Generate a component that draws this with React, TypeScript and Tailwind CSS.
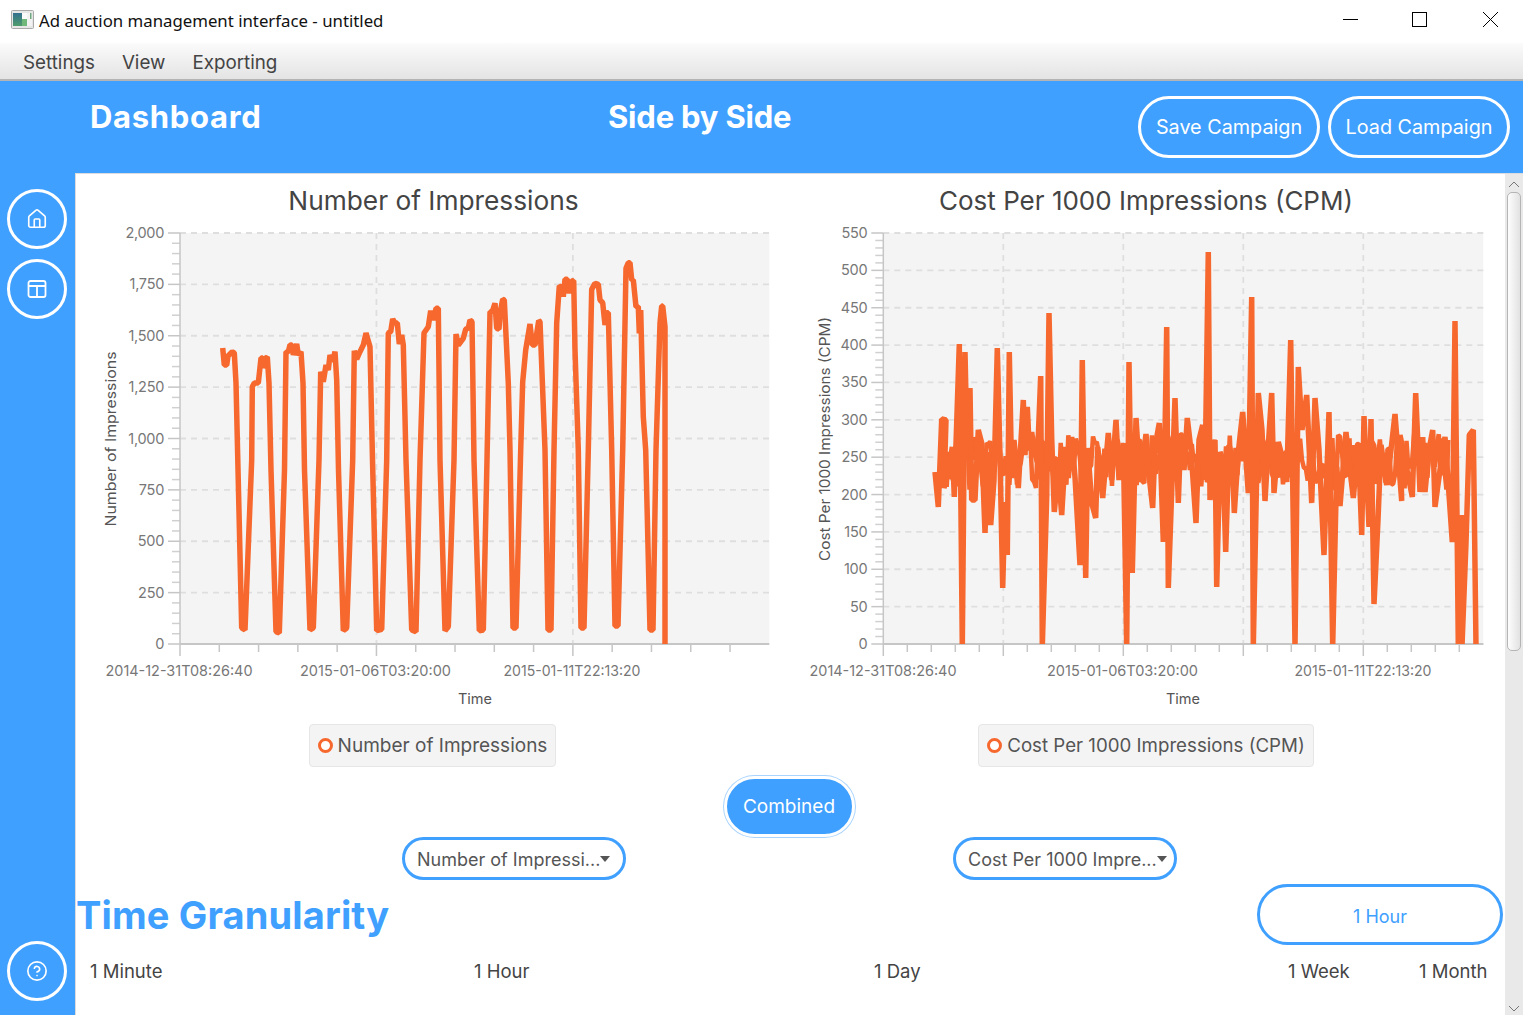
import React from 'react';
import { House, CircleHelp } from 'lucide-react';

const POPPINS = "font-['Inter',sans-serif]";

// traced from the reference, page coordinates
const impressions =
  '222.7,348 224.3,365 226.7,365 228,356 232.3,351.7 234.3,353 236,383 241.7,628 245,630 251.7,460 252.3,386.7 254.3,383 258.3,383 261,358 262.7,358 263.3,368 265.7,358 267.3,357 269,383 271,470 276,631.7 279.3,633 284.5,470 286,351.7 288.3,352 290,345 292,345 293.3,355 296.7,344 298.3,355 301,351.7 303,383 304.5,470 310,630 313.3,628 319,460 320.7,371.7 323.3,381.7 326,365 328.3,370 330,355 332.7,361.7 335,351.7 336.7,380 338.5,470 343.3,630.7 346.7,628 352.7,460 354.3,350.7 356.7,359 360,351.7 363.3,345 366,333 370,346.7 372.5,460 376.7,630.7 381.7,629.3 386.7,460 388.3,333 390.7,331.7 392.7,319 395,323 397.3,323 399.3,344 401.7,335 403.3,345 406,460 411.7,630 416,631.7 420,460 424,333 428.3,326.7 430.7,310.7 433.3,320 436,308.3 438.3,308.3 440,460 445,630.7 448.3,626.7 454,460 456,334 458.3,345 463.3,338.3 465.7,329.3 468.3,328 470,320 472,321.7 474,460 479.3,630.7 483.3,630 487,460 490,311.7 492.3,311.7 495,303.3 496.7,328.3 499,329 500,313 502.7,299.3 504.3,300 508.3,383 510,450 513,628 516,628 520.7,450 522.7,381.7 525.7,350 530,324 532.3,345 535,345 538.7,320.7 540,321.7 545,450 548,630 551,630 554,450 556.7,323 559.3,286 562,287 563.3,296.7 565,279.3 567.3,279.3 569.3,293.3 571.7,281 573.7,280.7 575,350 578.3,450 581,628 584,628 588.3,450 591.7,289.3 595,283.3 598.3,284.3 600,300 602.7,302.7 605,325 606.7,312.7 608.3,312.7 611.7,450 615,626 618,626 622.7,450 626,268.3 628.3,262.7 630,262.7 631.7,280 633.3,280 636,306.7 638.3,306.7 639.3,333.3 640.7,310 643.3,416.7 645.7,450 650,630 653,630 656,450 660,323 661.7,306 662.7,306 665,326.7 665,644';

const cpm =
  '935,472 938.3,507 941.7,419 946,420 944,488 948.3,473 952.3,447 954.3,497 955.7,453 959.3,344 962.3,646 965,352 967,445 970,388 971.7,500 975,500 978.3,430 981.7,443 985,533 988.3,452 990.7,525 994,480 997.3,348 1000,457 1002.7,588 1005,502 1007.3,555 1009.3,352 1011.7,478 1014,440 1018.3,488 1023.3,400 1025,455 1027.3,407 1029.3,450 1031.7,432 1034,450 1037.3,462 1040.7,376 1042.3,646 1046.7,497 1049,313 1051.7,438 1054.3,512 1058.3,470 1061.7,515 1065.7,447 1068.3,478 1071.7,437 1075,477 1080,565 1082.3,360 1085.7,578 1087.7,448 1091.7,503 1095.7,518 1097.7,447 1102.7,498 1108.3,433 1111.7,480 1116,420 1119,480 1123.3,443 1126.7,646 1129,362 1132.3,573 1136,418 1140,482 1146,434 1149,475 1152.7,508 1155,447 1159.3,423 1163.3,542 1166.7,327 1168.3,588 1175,398 1178.3,503 1180.7,437 1184,470 1187.3,418 1191,450 1196,523 1199,440 1202.7,425 1205,480 1208.3,252 1210,500 1215,440 1216.7,587 1220,452 1223,460 1225.7,552 1229,445 1232.3,458 1234.3,513 1238.3,452 1242.7,412 1248.3,493 1251.7,297 1253.3,646 1258.3,393 1262,430 1265,501 1268,450 1271.7,393 1274,493 1278.3,442 1283,460 1286.7,482 1290.7,340 1295,646 1298.3,367 1302,430 1306.7,395 1311.7,503 1315,398 1319,450 1324,555 1329,412 1332.7,646 1336.7,467 1340,506 1346,432 1350,470 1353.3,498 1358.3,443 1361.7,535 1364,416 1369,527 1371,419 1374,604 1378,520 1381,445 1386.7,485 1391,450 1395,414 1401.7,501 1400,435 1407,470 1412.3,497 1415.7,393 1420,492 1422.7,437 1425,492 1429,450 1432.7,430 1435,507 1440,470 1445,437 1452.3,542 1455,321 1458.3,646 1461.7,515 1462,646 1466,543 1469.3,435 1473.3,430 1476,646';

// the hourly noise between the traced spikes, too dense to trace by hand
const cpmNoise = (() => {
  const pts: string[] = [];
  let seed = 17;
  for (let x = 941; x < 1450; x += 1.9) {
    seed = (seed * 137 + 59) % 1009;
    const y = 434 + (seed / 1009) * 56;
    pts.push(`${x.toFixed(1)},${y.toFixed(1)}`);
  }
  return pts.join(' ');
})();

const Chart: React.FC<{
  box: string;
  width: number;
  plotLeft: number;
  plotRight: number;
  yLabels: string[];
  majorX: number;
  minorStep: number;
  xLabels: { x: number; w: number; text: string }[];
  points: string;
  extra?: string;
  yTitle: string;
  yTitleX: number;
  yTitleLen: number;
  timeX: number;
  clip: string;
}> = ({ box, width, plotLeft, plotRight, yLabels, majorX, minorStep, xLabels, points, extra, yTitle, yTitleX, yTitleLen, timeX, clip }) => {
  const top = 233;
  const bottom = 644;
  const step = (bottom - top) / (yLabels.length - 1);
  const xTicks: number[] = [];
  for (let x = plotLeft + minorStep; x < plotRight - 1; x += minorStep) xTicks.push(x);
  const majors = xTicks.filter((x) => Math.abs(((x - plotLeft) / majorX) - Math.round((x - plotLeft) / majorX)) < 0.01);

  return (
    <svg width={width} height={492} viewBox={box} className="block">
      <defs>
        <clipPath id={clip}>
          <rect x={plotLeft} y={top} width={plotRight - plotLeft} height={bottom - top} />
        </clipPath>
      </defs>
      <rect x={plotLeft} y={top} width={plotRight - plotLeft} height={bottom - top} fill="#f4f4f4" />
      {yLabels.map((label, i) => {
        const y = top + i * step;
        return (
          <g key={label}>
            <line x1={plotLeft} x2={plotRight} y1={y} y2={y} stroke="#dedede" strokeWidth="1.8" strokeDasharray="6 5" />
            <line x1={plotLeft - 12} x2={plotLeft} y1={y} y2={y} stroke="#c6c6c6" strokeWidth="1.5" />
            <text x={plotLeft - 16} y={y + 5} textAnchor="end" fontSize="14.5" fill="#777" letterSpacing="-0.3" fontFamily="Inter, sans-serif">
              {label}
            </text>
            {i < yLabels.length - 1 &&
              [1, 2, 3, 4].map((k) => (
                <line key={k} x1={plotLeft - 8} x2={plotLeft} y1={y + (k * step) / 5} y2={y + (k * step) / 5} stroke="#d0d0d0" strokeWidth="1.5" />
              ))}
          </g>
        );
      })}
      {majors.map((x) => (
        <line key={x} x1={x} x2={x} y1={top} y2={bottom} stroke="#dedede" strokeWidth="1.8" strokeDasharray="6 5" />
      ))}
      <line x1={plotLeft} x2={plotLeft} y1={top} y2={bottom} stroke="#c6c6c6" strokeWidth="1.5" />
      <line x1={plotLeft} x2={plotRight} y1={bottom} y2={bottom} stroke="#c6c6c6" strokeWidth="1.8" />
      {xTicks.map((x) => (
        <line key={x} x1={x} x2={x} y1={bottom} y2={majors.includes(x) ? bottom + 12 : bottom + 8} stroke="#c6c6c6" strokeWidth="1.5" />
      ))}
      <line x1={plotLeft} x2={plotLeft} y1={bottom} y2={bottom + 12} stroke="#c6c6c6" strokeWidth="1.5" />
      {extra && <polyline points={extra} fill="none" stroke="#f6682e" strokeWidth="4.5" strokeLinejoin="bevel" />}
      <polyline
        points={points}
        fill="none"
        stroke="#f6682e"
        strokeWidth="5.5"
        strokeLinejoin="bevel"
        clipPath={`url(#${clip})`}
      />
      {xLabels.map((l) => (
        <text
          key={l.text}
          x={l.x}
          y={676}
          textAnchor="middle"
          fontSize="14.5"
          fill="#777"
          textLength={l.w}
          lengthAdjust="spacingAndGlyphs"
          fontFamily="Inter, sans-serif"
        >
          {l.text}
        </text>
      ))}
      <text x={timeX} y={704} textAnchor="middle" fontSize="14.5" fill="#555" fontFamily="Inter, sans-serif">
        Time
      </text>
      <text
        transform={`translate(${yTitleX} 439) rotate(-90)`}
        textAnchor="middle"
        fontSize="14.5"
        fill="#555"
        textLength={yTitleLen}
        lengthAdjust="spacingAndGlyphs"
        fontFamily="Inter, sans-serif"
      >
        {yTitle}
      </text>
    </svg>
  );
};

const Legend: React.FC<{ label: string; textClass: string }> = ({ label, textClass }) => (
  <div className={`h-[43px] flex items-center gap-[5px] px-2 bg-[#f4f4f4] border border-[#e6e6e6] rounded-[4px] leading-[24px] text-[#555] ${textClass} ${POPPINS}`}>
    <span className="w-[15px] h-[15px] rounded-full border-[3.5px] border-[#f6682e] bg-white"></span>
    {label}
  </div>
);

const Select: React.FC<{ label: string }> = ({ label }) => (
  <div className={`w-[224px] h-[43px] flex items-center pl-[12px] pr-[12px] pt-[1px] bg-white border-[3px] border-[#40a0ff] rounded-full text-[18px] text-[#555] ${POPPINS}`}>
    <span className="whitespace-nowrap flex-1">{label}</span>
    <span className="w-0 h-0 border-x-[5px] border-x-transparent border-t-[6px] border-t-[#555] mr-[2px]"></span>
  </div>
);

const Circle: React.FC<{ children: React.ReactNode }> = ({ children }) => (
  <button className="w-[60px] h-[60px] rounded-full border-[3px] border-white flex items-center justify-center text-white">
    {children}
  </button>
);

const App: React.FC = () => {
  return (
    <div className="w-[1523px] h-[1015px] flex flex-col overflow-hidden bg-white">
      {/* Title bar */}
      <div className="h-[43px] flex items-center pl-[11px] shrink-0 bg-white">
        <svg width="23" height="19" viewBox="0 0 23 19" className="mr-[5px] mb-[4px]">
          <defs>
            <linearGradient id="appicon" x1="0" y1="0" x2="0" y2="1">
              <stop offset="0" stopColor="#33708f" />
              <stop offset="1" stopColor="#4f9c6c" />
            </linearGradient>
          </defs>
          <rect x="0.5" y="0.5" width="22" height="18" rx="1" fill="#e6e6e6" stroke="#a9a9a9" />
          <rect x="2" y="3" width="9" height="13" fill="url(#appicon)" />
          <rect x="11" y="9" width="5" height="7" fill="#6fb87a" />
          <rect x="11" y="3" width="5" height="6" fill="#fafafa" />
          <rect x="16" y="3" width="5" height="13" fill="#f2f2f2" />
          <rect x="19" y="3" width="1.5" height="6" fill="#6fa87f" />
        </svg>
        <span className="font-['Noto_Sans',sans-serif] text-[16.8px] text-[#111] whitespace-nowrap mb-[1px]">
          Ad auction management interface - untitled
        </span>
        <div className="ml-auto flex items-center">
          <svg width="180" height="20" viewBox="0 0 180 20" className="block mb-[6px]" stroke="#000" fill="none">
            <line x1="0" x2="15" y1="10.5" y2="10.5" />
            <rect x="69.5" y="3.5" width="14" height="14" />
            <path d="M140 3 L155 18 M155 3 L140 18" />
          </svg>
        </div>
      </div>

      {/* Menu bar */}
      <div className={`h-[38px] shrink-0 flex items-center pl-[23px] pt-[4px] gap-[27px] bg-gradient-to-b from-[#fbfbfb] to-[#e4e4e4] border-b-2 border-[#b4b4b4] text-[18.8px] text-[#444] ${POPPINS}`}>
        <span>Settings</span>
        <span>View</span>
        <span>Exporting</span>
      </div>

      {/* Header */}
      <div className={`h-[92px] shrink-0 bg-[#40a0ff] flex items-start text-white ${POPPINS}`}>
        <h1 className="ml-[90px] w-[518px] mt-[16px] text-[31px] leading-[40px] font-bold tracking-[0.7px]">Dashboard</h1>
        <h1 className="mt-[16px] text-[31px] leading-[40px] font-bold tracking-[-0.2px]">Side by Side</h1>
        <div className="ml-auto mr-[13px] mt-[15px] flex gap-[8px]">
          <button className="w-[182px] h-[62px] pt-[2px] rounded-full border-[3px] border-white text-[19.8px]">Save Campaign</button>
          <button className="w-[182px] h-[62px] pt-[2px] rounded-full border-[3px] border-white text-[19.8px]">Load Campaign</button>
        </div>
      </div>

      <div className="flex-1 flex min-h-0">
        {/* Sidebar */}
        <div className="w-[75px] shrink-0 bg-[#40a0ff] flex flex-col items-center pt-[16px] pb-[14px] pr-[1px]">
          <div className="flex flex-col gap-[10px]">
            <Circle>
              <House size={22} strokeWidth={1.8} />
            </Circle>
            <Circle>
              <svg width="20" height="20" viewBox="0 0 20 20" fill="none" stroke="currentColor" strokeWidth="1.8">
                <rect x="1.5" y="2" width="17" height="16" rx="2" />
                <path d="M1.5 7h17M10 7v11" />
              </svg>
            </Circle>
          </div>
          <div className="mt-auto">
            <Circle>
              <CircleHelp size={22} strokeWidth={1.8} />
            </Circle>
          </div>
        </div>

        {/* Content */}
        <div className="flex-1 flex min-w-0 bg-white border-t border-l border-[#dcdcdc]">
          <main className={`flex-1 min-w-0 flex flex-col ${POPPINS}`}>
            <div className="grid grid-cols-[715px_714px]">
              <div className="flex flex-col items-center">
                <h2 className="mt-[9px] text-[26.3px] leading-[36px] text-[#444] mb-[1px]">Number of Impressions</h2>
                <div className="self-start">
                  <Chart
                    box="76 220 715 492"
                    width={715}
                    plotLeft={180}
                    plotRight={769.3}
                    yLabels={['2,000', '1,750', '1,500', '1,250', '1,000', '750', '500', '250', '0']}
                    majorX={196.44}
                    minorStep={39.288}
                    xLabels={[
                      { x: 179, w: 147, text: '2014-12-31T08:26:40' },
                      { x: 375.5, w: 151, text: '2015-01-06T03:20:00' },
                      { x: 572, w: 137, text: '2015-01-11T22:13:20' },
                    ]}
                    points={impressions}
                    yTitle="Number of Impressions"
                    yTitleX={116}
                    yTitleLen={175}
                    timeX={475}
                    clip="clip-left"
                  />
                </div>
                <div className="mt-[12px] pr-[2px]">
                  <Legend label="Number of Impressions" textClass="text-[19px]" />
                </div>
              </div>
              <div className="flex flex-col items-center pr-[4px]">
                <h2 className="mt-[9px] text-[26px] leading-[36px] text-[#444] mb-[1px]">Cost Per 1000 Impressions (CPM)</h2>
                <div className="self-start">
                  <Chart
                    box="791 220 710 492"
                    width={710}
                    plotLeft={883.3}
                    plotRight={1483.3}
                    yLabels={['550', '500', '450', '400', '350', '300', '250', '200', '150', '100', '50', '0']}
                    majorX={120}
                    minorStep={24}
                    xLabels={[
                      { x: 883, w: 147, text: '2014-12-31T08:26:40' },
                      { x: 1122.5, w: 151, text: '2015-01-06T03:20:00' },
                      { x: 1363, w: 137, text: '2015-01-11T22:13:20' },
                    ]}
                    points={cpm}
                    extra={cpmNoise}
                    yTitle="Cost Per 1000 Impressions (CPM)"
                    yTitleX={830}
                    yTitleLen={244}
                    timeX={1183}
                    clip="clip-right"
                  />
                </div>
                <div className="mt-[12px]">
                  <Legend label="Cost Per 1000 Impressions (CPM)" textClass="text-[18.7px]" />
                </div>
              </div>
            </div>

            <div className="flex justify-center mt-[9px] pr-[3px]">
              <button className="w-[131px] h-[61px] pt-[2px] rounded-full bg-[#40a0ff] border-[3px] border-white ring-1 ring-[#a9d4ff] text-white text-[19px]">
                Combined
              </button>
            </div>

            <div className="flex pl-[326px]">
              <Select label="Number of Impressi..." />
              <div className="w-[327px]"></div>
              <Select label="Cost Per 1000 Impre..." />
            </div>

            <div className="flex items-center justify-between h-[65px] mt-[2px] pr-[2px]">
              <h2 className="text-[38px] font-bold text-[#40a0ff] leading-[48px] tracking-[0.15px] whitespace-nowrap">Time Granularity</h2>
              <button className="w-[246px] h-[61px] pt-[4px] rounded-full border-[3px] border-[#40a0ff] text-[#40a0ff] text-[18px]">
                1 Hour
              </button>
            </div>

            <div className="mt-[11px] ml-[14px] grid grid-cols-[384px_400px_414px_131px_auto] text-[18.5px] text-[#444] whitespace-nowrap">
              <span>1 Minute</span>
              <span>1 Hour</span>
              <span>1 Day</span>
              <span>1 Week</span>
              <span>1 Month</span>
            </div>
          </main>

          {/* Scrollbar */}
          <div className="w-[18px] shrink-0 bg-[#e9e9e9] flex flex-col items-center">
            <svg width="14" height="10" viewBox="0 0 14 10" className="mt-[5px]" fill="none" stroke="#777">
              <path d="M2 8 L7 3 L12 8" />
            </svg>
            <div className="w-[14px] h-[459px] mt-[3px] rounded-[5px] border border-[#b5b5b5] bg-gradient-to-r from-[#fdfdfd] to-[#e2e2e2]"></div>
            <svg width="14" height="10" viewBox="0 0 14 10" className="mt-auto mb-[1px]" fill="none" stroke="#777">
              <path d="M2 2 L7 7 L12 2" />
            </svg>
          </div>
        </div>
      </div>
    </div>
  );
};

export default App;
